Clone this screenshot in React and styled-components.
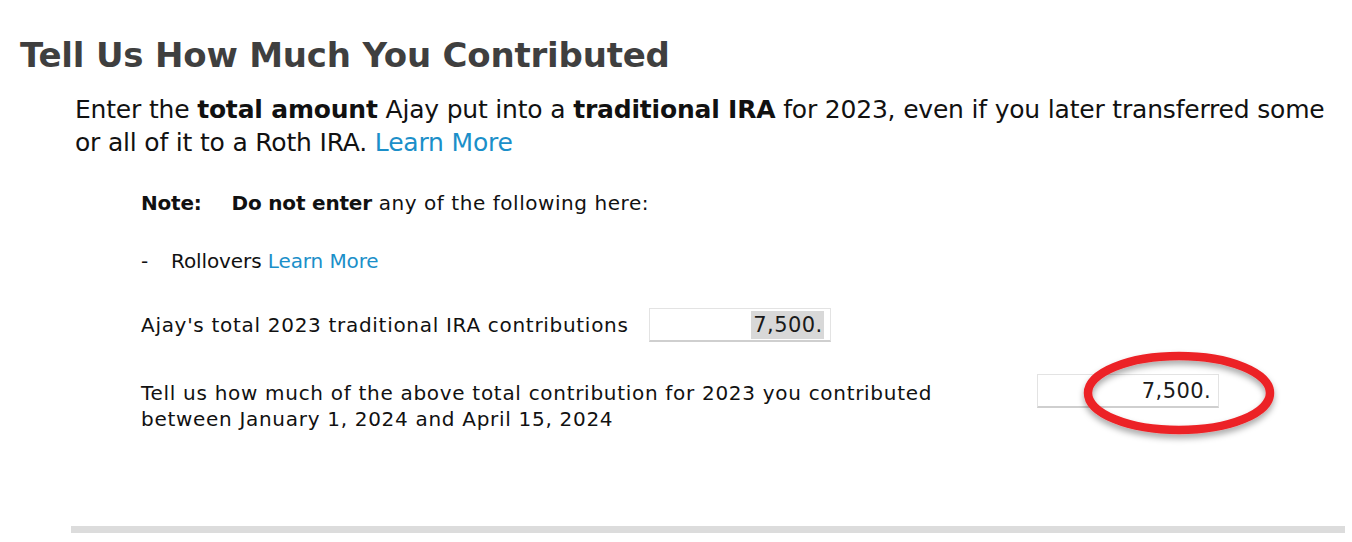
import React from 'react'
import styled, { createGlobalStyle } from 'styled-components'

const GlobalStyle = createGlobalStyle`
  html, body {
    margin: 0;
    padding: 0;
    background: #ffffff;
  }
  body {
    font-family: "DejaVu Sans", "Liberation Sans", sans-serif;
    color: #111111;
  }
`;

const Page = styled.div`
  width: 1352px;
  height: 542px;
  overflow: hidden;
  padding-top: 34px;
  box-sizing: border-box;
`;

const Heading = styled.h1`
  margin: 0 0 0 20px;
  font-size: 34px;
  line-height: 42px;
  font-weight: bold;
  letter-spacing: -0.2px;
  color: #3f3f3f;
`;

const Intro = styled.p`
  margin: 17px 0 0 75px;
  font-size: 25px;
  line-height: 33px;
  letter-spacing: -0.19px;
  white-space: nowrap;
  color: #111;

  b {
    font-weight: bold;
  }
`;

const Link = styled.a`
  color: #1b8fc9;
  text-decoration: none;
  cursor: pointer;
`;

const Details = styled.div`
  margin: 31px 0 0 141px;
  display: flex;
  flex-direction: column;
  font-size: 20px;
  line-height: 26px;
  letter-spacing: 0.7px;
  color: #111;
`;

const NoteLine = styled.div`
  display: flex;
  gap: 30px;
  letter-spacing: 0.55px;

  b {
    font-weight: bold;
    letter-spacing: -0.2px;
  }
`;

const Bullet = styled.div`
  margin-top: 32px;
  display: flex;
  gap: 17px;
  letter-spacing: -0.1px;
`;

const Dash = styled.span`
  width: 13px;
`;

const Row = styled.div`
  margin-top: ${(p) => p.$top}px;
  display: flex;
  align-items: ${(p) => p.$align};
  gap: 20px;
`;

const Label = styled.div`
  width: ${(p) => (p.$width ? `${p.$width}px` : 'auto')};
  flex-shrink: 0;
  white-space: nowrap;
`;

const AmountWrap = styled.div`
  position: relative;
  margin-top: ${(p) => p.$shift || 0}px;
`;

const Amount = styled.div`
  width: 182px;
  height: 34px;
  box-sizing: border-box;
  border: 1px solid #e3e3e3;
  border-bottom: 2px solid #cfcfcf;
  background: #fff;
  display: flex;
  align-items: center;
  justify-content: flex-end;
  padding-right: 6px;
  font-size: 21px;
  letter-spacing: 0.4px;
  color: #1a1a1a;
`;

const Selected = styled.span`
  background: ${(p) => (p.$selected ? '#d8d8d8' : 'transparent')};
  padding: 1px 1px 1px 2px;
`;

const Circle = styled.svg`
  position: absolute;
  left: 45px;
  top: -24px;
  pointer-events: none;
  overflow: visible;
`;

const Rule = styled.hr`
  margin: 94px 7px 0 71px;
  height: 7px;
  border: none;
  background: #dcdcdc;
`;

const App = () => {
  return (
    <Page>
      <GlobalStyle />
      <Heading>Tell Us How Much You Contributed</Heading>
      <Intro>
        Enter the <b>total amount</b> Ajay put into a <b>traditional IRA</b> for 2023, even if you later transferred some
        <br />
        or all of it to a Roth IRA. <Link>Learn More</Link>
      </Intro>
      <Details>
        <NoteLine>
          <b>Note:</b>
          <span>
            <b>Do not enter</b> any of the following here:
          </span>
        </NoteLine>
        <Bullet>
          <Dash>-</Dash>
          <span>
            Rollovers <Link>Learn More</Link>
          </span>
        </Bullet>
        <Row $top={34} $align="center">
          <Label>Ajay's total 2023 traditional IRA contributions</Label>
          <AmountWrap>
            <Amount>
              <Selected $selected>7,500.</Selected>
            </Amount>
          </AmountWrap>
        </Row>
        <Row $top={38} $align="flex-start">
          <Label $width={876}>
            Tell us how much of the above total contribution for 2023 you contributed
            <br />
            between January 1, 2024 and April 15, 2024
          </Label>
          <AmountWrap $shift={-6}>
            <Amount>
              <Selected>7,500.</Selected>
            </Amount>
            <Circle width="194" height="86" viewBox="0 0 194 86">
              <defs>
                <filter id="shade" x="-20%" y="-20%" width="140%" height="160%">
                  <feDropShadow dx="0" dy="4" stdDeviation="3" floodColor="#000" floodOpacity="0.35" />
                </filter>
              </defs>
              <ellipse
                cx="97"
                cy="43"
                rx="91"
                ry="37"
                fill="none"
                stroke="#ec2327"
                strokeWidth="8.5"
                filter="url(#shade)"
              />
            </Circle>
          </AmountWrap>
        </Row>
      </Details>
      <Rule />
    </Page>
  )
}

export default App
